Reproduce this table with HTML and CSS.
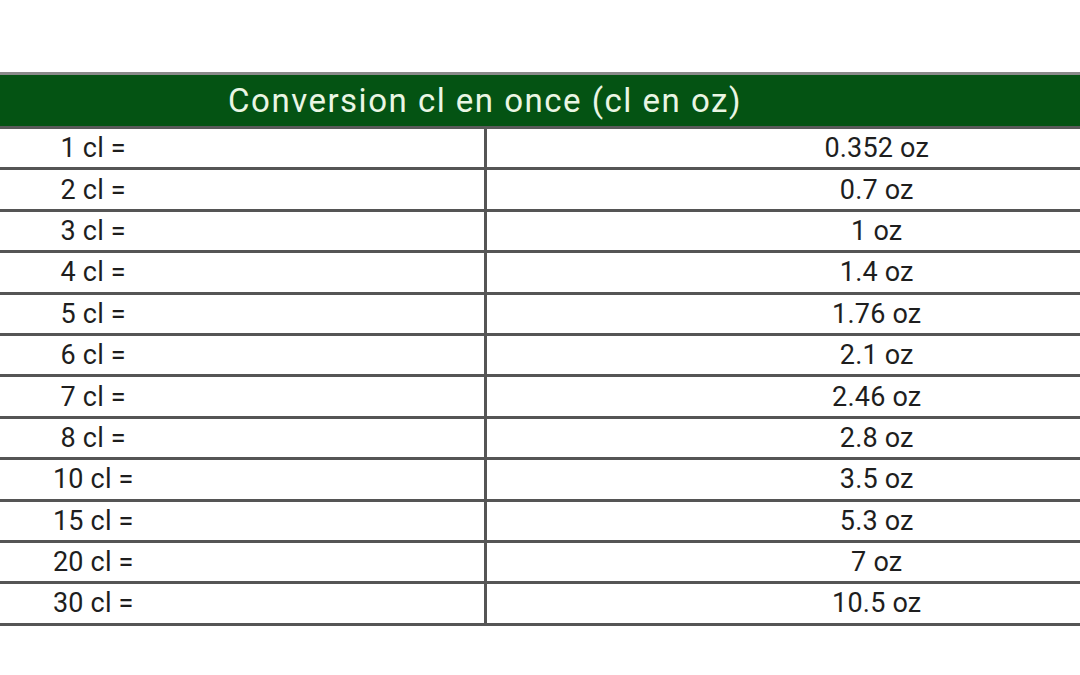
FILE: index.html
```html
<!DOCTYPE html>
<html lang="fr">
<head>
<meta charset="utf-8">
<title>Conversion cl en once</title>
<link rel="stylesheet" href="styles.css">
</head>
<body>
<div class="page">
<table class="conv">
  <thead>
    <tr><th colspan="2">Conversion cl en once (cl en oz)</th></tr>
  </thead>
  <tbody>
    <tr><td>1 cl =</td><td>0.352 oz</td></tr>
    <tr><td>2 cl =</td><td>0.7 oz</td></tr>
    <tr><td>3 cl =</td><td>1 oz</td></tr>
    <tr><td>4 cl =</td><td>1.4 oz</td></tr>
    <tr><td>5 cl =</td><td>1.76 oz</td></tr>
    <tr><td>6 cl =</td><td>2.1 oz</td></tr>
    <tr><td>7 cl =</td><td>2.46 oz</td></tr>
    <tr><td>8 cl =</td><td>2.8 oz</td></tr>
    <tr><td>10 cl =</td><td>3.5 oz</td></tr>
    <tr><td>15 cl =</td><td>5.3 oz</td></tr>
    <tr><td>20 cl =</td><td>7 oz</td></tr>
    <tr><td>30 cl =</td><td>10.5 oz</td></tr>
  </tbody>
</table>
</div>
</body>
</html>
```

FILE: styles.css
```css
html, body {
  margin: 0;
  padding: 0;
  background: #ffffff;
  overflow: hidden;
  width: 1080px;
  height: 675px;
}

.page {
  padding-top: 72px;
}

.conv {
  border-collapse: collapse;
  table-layout: fixed;
  width: 1570px;
  margin-left: -300px;
  font-family: Roboto, "Noto Sans", sans-serif;
  color: #1e1e1e;
}

.conv th {
  background: #045313;
  color: #eaf6e4;
  font-weight: 400;
  font-size: 33px;
  letter-spacing: 1.5px;
  height: 51px;
  padding: 0;
  border: 3px solid #5a5a5a;
  border-top-color: #8a8a8a;
  text-align: center;
}

.conv td {
  width: 50%;
  height: 38.4px;
  padding: 0;
  font-size: 27px;
  letter-spacing: 0.2px;
  text-align: center;
  border: 3px solid #555555;
  line-height: 36px;
}
```
